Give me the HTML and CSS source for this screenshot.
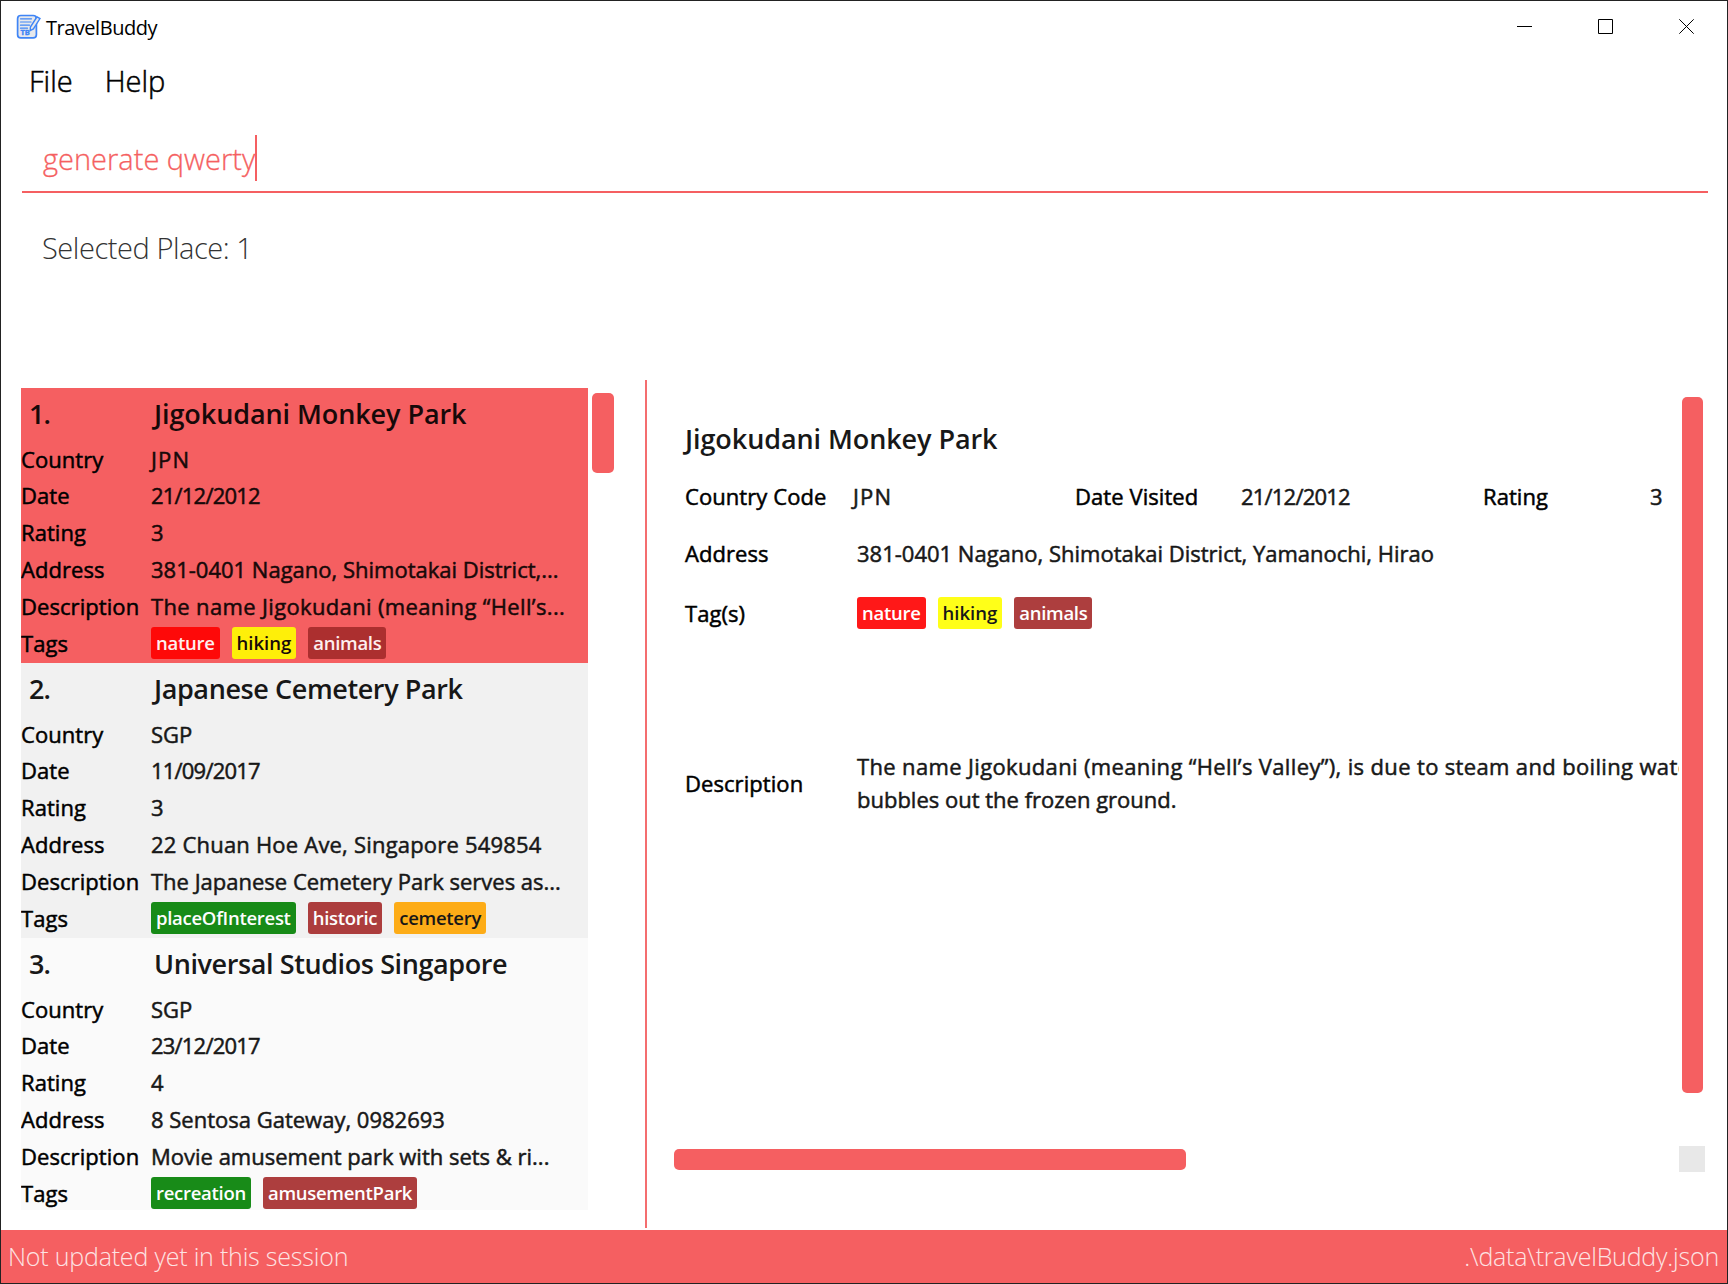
FILE: index.html
```html
<!DOCTYPE html>
<html lang="en">
<head>
<meta charset="utf-8">
<title>TravelBuddy</title>
<link rel="stylesheet" href="styles.css">
</head>
<body>
<div class="window">
  <header class="titlebar">
    <svg class="app-icon" width="26" height="26" viewBox="0 0 26 26" fill="none" stroke="#3f85f6" stroke-width="1.7" stroke-linecap="round">
      <rect x="2.6" y="1.5" width="18.8" height="22.4" rx="3.2" fill="#e6e8ec"/>
      <path d="M5.5 4.8h11M5.5 8h10.5M5.5 11.2h9M5.5 14.2h7" stroke-width="1.2"/>
      <path d="M22 2.8l3 1.8-6.6 10.4-3.2 1.6.2-3.6z" fill="#e6e8ec" stroke-width="1.4"/>
      <text x="5.4" y="21.4" class="app-icon-text">TB</text>
    </svg>
    <span class="app-title">TravelBuddy</span>
    <div class="window-controls">
      <svg width="15" height="15" viewBox="0 0 15 15"><path d="M0 7.5h15"/></svg>
      <svg width="15" height="15" viewBox="0 0 15 15"><path d="M.5.5h14v14H.5z"/></svg>
      <svg width="15" height="15" viewBox="0 0 15 15"><path d="M.3.3l14.4 14.4M14.7.3L.3 14.7"/></svg>
    </div>
  </header>
  <nav class="menubar"><span>File</span><span>Help</span></nav>
  <div class="command"><span>generate qwerty</span><span class="caret"></span></div>
  <div class="result">Selected Place: 1</div>
  <main class="panes">
    <section class="list-pane">
      <div class="list">
        <article class="card selected">
          <span class="idx">1.</span><h2 class="name">Jigokudani Monkey Park</h2>
          <span class="label">Country</span><span class="value code">JPN</span>
          <span class="label">Date</span><span class="value date">21/12/2012</span>
          <span class="label">Rating</span><span class="value">3</span>
          <span class="label">Address</span><span class="value">381-0401 Nagano, Shimotakai District,...</span>
          <span class="label">Description</span><span class="value wide">The name Jigokudani (meaning “Hell’s...</span>
          <span class="label">Tags</span><div class="tags"><span class="tag red">nature</span><span class="tag yellow">hiking</span><span class="tag brown">animals</span></div>
        </article>
        <article class="card even">
          <span class="idx">2.</span><h2 class="name tight">Japanese Cemetery Park</h2>
          <span class="label">Country</span><span class="value">SGP</span>
          <span class="label">Date</span><span class="value date">11/09/2017</span>
          <span class="label">Rating</span><span class="value">3</span>
          <span class="label">Address</span><span class="value mid">22 Chuan Hoe Ave, Singapore 549854</span>
          <span class="label">Description</span><span class="value">The Japanese Cemetery Park serves as...</span>
          <span class="label">Tags</span><div class="tags"><span class="tag green">placeOfInterest</span><span class="tag brown">historic</span><span class="tag orange">cemetery</span></div>
        </article>
        <article class="card">
          <span class="idx">3.</span><h2 class="name tight">Universal Studios Singapore</h2>
          <span class="label">Country</span><span class="value">SGP</span>
          <span class="label">Date</span><span class="value date">23/12/2017</span>
          <span class="label">Rating</span><span class="value">4</span>
          <span class="label">Address</span><span class="value">8 Sentosa Gateway, 0982693</span>
          <span class="label">Description</span><span class="value">Movie amusement park with sets &amp; ri...</span>
          <span class="label">Tags</span><div class="tags"><span class="tag green">recreation</span><span class="tag brown">amusementPark</span></div>
        </article>
      </div>
      <div class="thumb list-thumb"></div>
    </section>
    <section class="detail-pane">
      <div class="detail">
        <h2 class="detail-name">Jigokudani Monkey Park</h2>
        <div class="facts"><span class="label">Country Code</span><span class="value code">JPN</span><span class="label">Date Visited</span><span class="value date">21/12/2012</span><span class="label">Rating</span><span class="value">3</span></div>
        <div class="field address"><span class="label">Address</span><span class="value">381-0401 Nagano, Shimotakai District, Yamanochi, Hirao</span></div>
        <div class="field tagged"><span class="label">Tag(s)</span><div class="tags"><span class="tag red">nature</span><span class="tag yellow">hiking</span><span class="tag brown">animals</span></div></div>
        <div class="field description"><span class="label">Description</span><p class="value"><span class="wide">The name Jigokudani (meaning “Hell’s Valley”), is due to steam and boiling water that</span><br>bubbles out the frozen ground.</p></div>
      </div>
      <div class="thumb detail-thumb"></div>
      <div class="thumb hscroll-thumb"></div>
      <div class="corner"></div>
    </section>
  </main>
  <footer class="statusbar"><span>Not updated yet in this session</span><span>.\data\travelBuddy.json</span></footer>
</div>
</body>
</html>
```
FILE: styles.css
```css
* { box-sizing: border-box; }
body { margin: 0; font-family: "Open Sans", "Noto Sans", sans-serif; color: #000; }
h2, p { margin: 0; font: inherit; }

.window { width: 1728px; height: 1284px; border: 1px solid #222; background: #fff; display: flex; flex-direction: column; overflow: hidden; }

/* Title bar */
.titlebar { height: 53px; display: flex; align-items: flex-start; padding: 12px 33px 0 14px; }
.app-icon { flex: none; margin-top: 1px; }
.app-icon-text { font: 700 7.5px "Open Sans", sans-serif; fill: #3f85f6; stroke: #3f85f6; stroke-width: .4px; }
.app-title { margin: 1px 0 0 5px; font-size: 20px; line-height: 28px; letter-spacing: -.48px; }
.window-controls { margin: 6px 0 0 auto; display: flex; gap: 66px; }
.window-controls svg { fill: none; stroke: #000; stroke-width: 1; display: block; }

/* Menu, command box and result */
.menubar { height: 56px; display: flex; padding: 7px 28px; gap: 32px; font-size: 29px; line-height: 40px; font-weight: 300; letter-spacing: 0; -webkit-text-stroke: .5px currentColor; }
.command { height: 83px; margin: 0 19px 0 21px; padding: 25px 0 0 21px; border-bottom: 2px solid #f55f61; display: flex; color: #f55f61; font-size: 29px; line-height: 47px; font-weight: 300; -webkit-text-stroke: .3px currentColor; }
.caret { width: 2px; height: 46px; background: #f55f61; }
.result { height: 187px; padding: 32px 41px; font-size: 29px; line-height: 46px; font-weight: 300; letter-spacing: -.45px; color: #333; }

.panes { height: 850px; display: flex; }

/* Place list */
.list-pane { width: 646px; height: 848px; display: flex; padding: 8px 0 0 20px; border-right: 2px solid #f46d6f; }
.list { width: 567px; height: 822px; overflow: hidden; }
.card { height: 275px; display: grid; grid-template-columns: 130px 1fr; grid-template-rows: 53px 36px repeat(4, 37px) 38px; font-size: 22px; line-height: 37px; background: #fafafa; white-space: nowrap; }
.card.even { background: #f1f1f1; }
.card.selected { background: #f55f61; }
.idx, .name, .detail-name { font-size: 27px; line-height: 51px; font-weight: 600; letter-spacing: -.08px; opacity: .9; }
.idx { padding-left: 8px; letter-spacing: -1px; }
.name { padding-left: 3px; }
.name.tight { letter-spacing: -.4px; }
.label { letter-spacing: .07px; -webkit-text-stroke: .5px currentColor; }
.value { opacity: .9; letter-spacing: 0; -webkit-text-stroke: .5px currentColor; }
.mid { letter-spacing: .2px; }
.wide { letter-spacing: .35px; }
.date { letter-spacing: -.8px; }
.code { letter-spacing: 1.2px; }
.tags { display: flex; gap: 12px; padding-top: 2px; }
.tag { height: 32px; padding: 0 5px; border-radius: 3px; color: #fff; font-size: 18.5px; line-height: 31px; font-weight: 600; letter-spacing: -.28px; opacity: .9; }
.red { background: #f00; }
.yellow { background: #ff0; color: #000; letter-spacing: 0; }
.brown { background: #a52a2a; }
.green { background: #008000; }
.orange { background: #ffa500; color: #000; }

/* Scroll bars */
.thumb { background: #f55f61; border-radius: 5px; }
.list-thumb { width: 22px; height: 80px; margin: 5px 0 0 4px; }
.detail-thumb { grid-area: 1 / 3; width: 21px; height: 696px; margin-top: 17px; }
.hscroll-thumb { grid-area: 2 / 1; width: 512px; height: 21px; margin-top: 3px; }
.corner { grid-area: 2 / 2 / 3 / 4; width: 26px; height: 26px; background: #e8e8e8; }

/* Place details */
.detail-pane { flex: 1; display: grid; grid-template-columns: 1005px 3px 23px; grid-template-rows: 766px 27px; padding-left: 27px; }
.detail { grid-row: 1; padding-left: 11px; overflow: hidden; white-space: nowrap; font-size: 22px; line-height: 37px; }
.detail-name { padding-top: 33px; height: 98px; }
.facts { display: grid; grid-template-columns: 168px 222px 166px 242px 167px 60px; height: 57px; }
.field { display: grid; grid-template-columns: 172px 1fr; }
.address { height: 62px; }
.tagged { height: 153px; align-items: start; }
.tagged .label { margin-top: -2px; }
.tagged .tags { padding-top: 0; }
.description { align-items: center; }
.description p { line-height: 33px; }

/* Status bar */
.statusbar { flex: 1; display: flex; justify-content: space-between; padding: 0 8px 0 7px; background: #f55f61; color: #fde3e3; font-size: 25px; line-height: 53px; font-weight: 300; letter-spacing: -.2px; }
```
